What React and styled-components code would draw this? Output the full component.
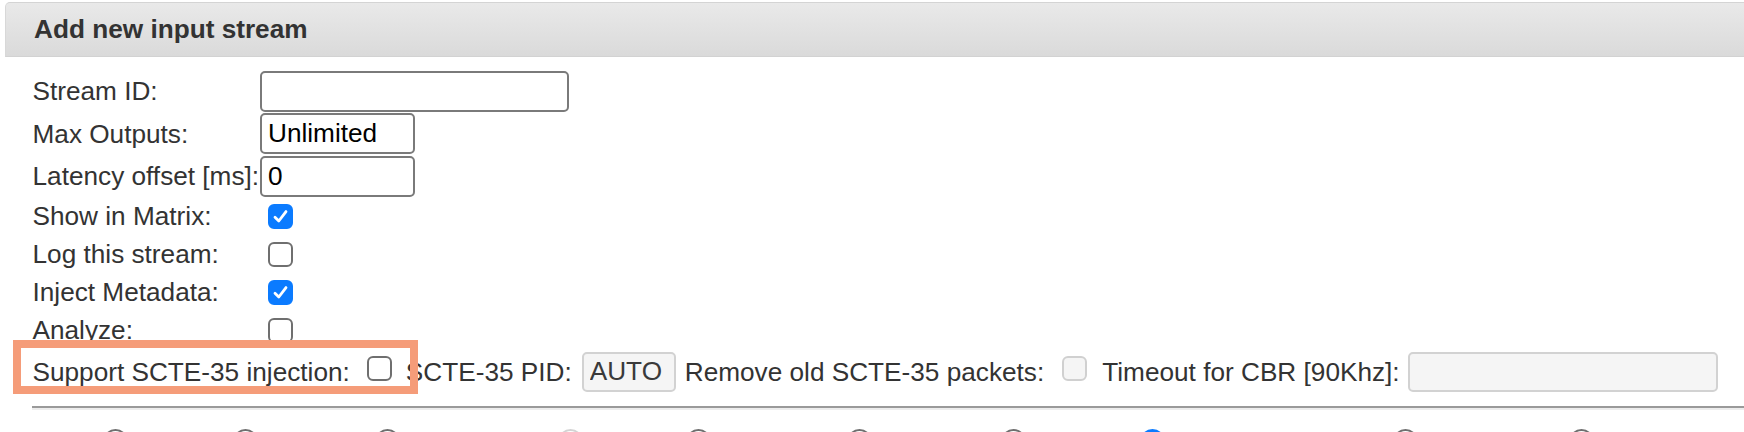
import React from "react";
import styled, { createGlobalStyle } from "styled-components";

const GlobalStyle = createGlobalStyle`
  html, body {
    margin: 0;
    padding: 0;
    background: #fff;
    overflow: hidden;
  }
  body {
    font-family: "Liberation Sans", Arial, Helvetica, sans-serif;
    color: #333;
  }
`;

// the frame cuts off the radio group, so the page is clipped to the window
const Page = styled.div`
  position: relative;
  box-sizing: border-box;
  height: 432px;
  overflow: hidden;
  padding-top: 2px;
`;

const PanelHeading = styled.div`
  margin-left: 5px;
  height: 55px;
  box-sizing: border-box;
  display: flex;
  align-items: center;
  padding-left: 28px;
  border-top: 1px solid #d4d4d4;
  border-left: 1px solid #d8d8d8;
  border-bottom: 1px solid #d2d2d2;
  border-top-left-radius: 5px;
  background: linear-gradient(#e9e9e9, #dadada);
  font-size: 26.2px;
  font-weight: bold;
  color: #333;
`;

const FormGrid = styled.div`
  display: grid;
  grid-template-columns: 227.5px auto;
  grid-template-rows: repeat(3, 42.5px) repeat(4, 38px);
  align-items: center;
  justify-items: start;
  margin: 13px 0 0 32.5px;
`;

const Label = styled.span`
  font-size: 26.2px;
  line-height: 1;
  white-space: nowrap;
  color: #333;
  margin-left: ${(p) => p.$ml || 0}px;
`;

const TextInput = styled.input`
  box-sizing: border-box;
  width: ${(p) => p.$w}px;
  height: ${(p) => (p.disabled ? 40 : 41)}px;
  margin: 0 0 0 ${(p) => p.$ml || 0}px;
  padding: 0 6px;
  border: 2px solid ${(p) => (p.disabled ? "#d2d2d2" : "#7a7a7a")};
  border-radius: 5px;
  background: ${(p) => (p.disabled ? "#f5f5f5" : "#fff")};
  font-family: inherit;
  font-size: 26.2px;
  color: ${(p) => (p.disabled ? "#3a3a3a" : "#000")};
  outline: none;
`;

const Box = styled.span`
  box-sizing: border-box;
  width: 25px;
  height: 25px;
  flex: none;
  display: inline-flex;
  align-items: center;
  justify-content: center;
  margin: 0 0 ${(p) => p.$mb || 0}px ${(p) => p.$ml ?? 8}px;
  border-radius: 6px;
  border: 2px solid
    ${(p) => (p.$checked ? "#0b7bff" : p.$disabled ? "#d0d0d0" : "#6f6f6f")};
  background: ${(p) =>
    p.$checked ? "#0b7bff" : p.$disabled ? "#f5f5f5" : "#fff"};
`;

function Checkbox({ checked, disabled, ml, mb }) {
  return (
    <Box $checked={checked} $disabled={disabled} $ml={ml} $mb={mb}>
      {checked && (
        <svg width="17" height="17" viewBox="0 0 17 17">
          <path
            d="M3 9.2 L6.8 13 L14 3.6"
            fill="none"
            stroke="#fff"
            strokeWidth="2.8"
            strokeLinecap="round"
            strokeLinejoin="round"
          />
        </svg>
      )}
    </Box>
  );
}

const SplitRow = styled.div`
  display: flex;
  align-items: center;
  height: 44.5px;
  margin-left: 32.5px;
`;

const Rule = styled.hr`
  margin: 12px 0 0 32px;
  height: 0;
  border: 0;
  border-top: 2px solid #9a9a9a;
  border-bottom: 2px solid #ededed;
`;

const RadioRow = styled.div`
  display: flex;
  margin-top: 19px;
`;

const Radio = styled.span`
  box-sizing: border-box;
  width: 25px;
  height: 25px;
  flex: none;
  border-radius: 50%;
  margin-left: ${(p) => p.$ml}px;
  border: 2px solid
    ${(p) => (p.$checked ? "#0b7bff" : p.$disabled ? "#d3d3d3" : "#6f6f6f")};
  background: ${(p) => (p.$checked ? "#0b7bff" : "#fff")};
`;

const Highlight = styled.div`
  position: absolute;
  left: 12.5px;
  top: 340px;
  width: 405px;
  height: 53.5px;
  box-sizing: border-box;
  border: 8.5px solid #f59c79;
  pointer-events: none;
`;

const fields = [
  { label: "Stream ID:", value: "", width: 309 },
  { label: "Max Outputs:", value: "Unlimited", width: 155 },
  { label: "Latency offset [ms]:", value: "0", width: 155 },
];

const toggles = [
  { label: "Show in Matrix:", checked: true },
  { label: "Log this stream:", checked: false },
  { label: "Inject Metadata:", checked: true },
  { label: "Analyze:", checked: false },
];

// centres of the radio buttons peeking in under the rule
const radios = [
  { x: 115 },
  { x: 245 },
  { x: 387 },
  { x: 570, disabled: true },
  { x: 698 },
  { x: 859 },
  { x: 1013 },
  { x: 1152, checked: true },
  { x: 1405 },
  { x: 1581 },
];

export default function App() {
  return (
    <Page>
      <GlobalStyle />
      <PanelHeading>Add new input stream</PanelHeading>

      <FormGrid>
        {fields.map((f) => (
          <React.Fragment key={f.label}>
            <Label>{f.label}</Label>
            <TextInput $w={f.width} defaultValue={f.value} />
          </React.Fragment>
        ))}
        {toggles.map((t) => (
          <React.Fragment key={t.label}>
            <Label>{t.label}</Label>
            <Checkbox checked={t.checked} />
          </React.Fragment>
        ))}
      </FormGrid>

      <SplitRow>
        <Label>Support SCTE-35 injection:</Label>
        <Checkbox ml={17} mb={7} />
        <Label $ml={14}>SCTE-35 PID:</Label>
        <TextInput $w={94} $ml={10} disabled defaultValue="AUTO" />
        <Label $ml={9}>Remove old SCTE-35 packets:</Label>
        <Checkbox disabled ml={18} mb={7} />
        <Label $ml={15}>Timeout for CBR [90Khz]:</Label>
        <TextInput $w={310} $ml={8} disabled defaultValue="" />
      </SplitRow>

      <Rule />

      <RadioRow>
        {radios.map((r, i) => (
          <Radio
            key={r.x}
            $checked={r.checked}
            $disabled={r.disabled}
            $ml={i === 0 ? r.x - 12.5 : r.x - radios[i - 1].x - 25}
          />
        ))}
      </RadioRow>

      <Highlight />
    </Page>
  );
}
